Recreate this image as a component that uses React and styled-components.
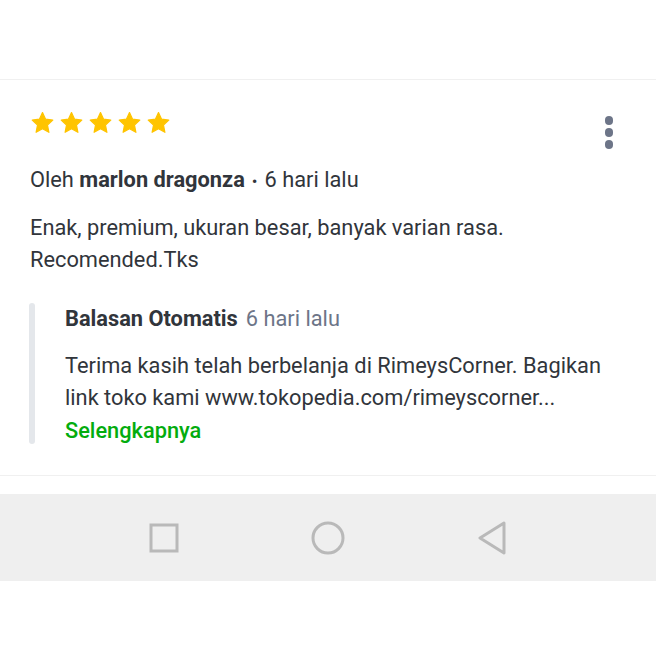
import React from 'react';
import styled, { createGlobalStyle } from 'styled-components';

const Global = createGlobalStyle`
  body {
    margin: 0;
    background: #fff;
    font-family: Roboto, "Noto Sans", Arial, sans-serif;
    color: #31353b;
  }
`

const Page = styled.div`
  width: 656px;
  height: 656px;
  display: flex;
  flex-direction: column;
`

const TopSpace = styled.div`
  height: 79px;
  border-bottom: 1px solid #f0f0f0;
`

const Review = styled.section`
  padding: 31px 30px 28px 30px;
  border-bottom: 1px solid #f0f0f0;
`

const Head = styled.div`
  display: flex;
  justify-content: space-between;
  align-items: flex-start;
  height: 24px;
`

const Stars = styled.div`
  display: flex;
  gap: 4px;
`

const Kebab = styled.div`
  display: flex;
  flex-direction: column;
  gap: 3.5px;
  margin-top: 5px;
  margin-right: 13px;
  span {
    width: 8.5px;
    height: 8.5px;
    border-radius: 50%;
    background: #6d7588;
  }
`

const Meta = styled.div`
  margin-top: 29px;
  font-size: 21.8px;
  line-height: 32px;
  color: #31353b;
  b { font-weight: 700; }
  .dot { margin: 0 7px; font-size: 17px; }
`

const Text = styled.p`
  margin: 15px 0 0;
  font-size: 21.8px;
  line-height: 32px;
  color: #31353b;
`

const Reply = styled.div`
  margin-top: 27px;
  display: flex;
  gap: 30px;
`

const Bar = styled.div`
  width: 6px;
  flex: none;
  border-radius: 3px;
  background: #e4e7eb;
  margin-left: -1px;
  margin-bottom: 3px;
`

const ReplyBody = styled.div`
  font-size: 21.8px;
  line-height: 32px;
`

const ReplyTitle = styled.div`
  b { font-weight: 700; color: #31353b; }
  span { color: #6d7588; margin-left: 8px; }
`

const ReplyText = styled.div`
  margin-top: 15px;
  color: #31353b;
`

const More = styled.div`
  color: #03ac0e;
  font-weight: 500;
  margin-top: 1px;
`

const Nav = styled.nav`
  margin-top: 18px;
  height: 87px;
  background: #efefef;
  display: flex;
  align-items: center;
  justify-content: center;
`

const NavItem = styled.div`
  width: 164px;
  display: flex;
  justify-content: center;
`

const Star = () => (
  <svg width="25" height="24" viewBox="0 0 24 24">
    <path
      d="M12 1.6l3.1 6.6 7.2.9-5.3 5 1.4 7.2L12 17.8l-6.4 3.5 1.4-7.2-5.3-5 7.2-.9z"
      fill="#ffc400"
      stroke="#ffc400"
      strokeWidth="1.2"
      strokeLinejoin="round"
    />
  </svg>
)

export default function App() {
  return (
    <Page>
      <Global />
      <TopSpace />
      <Review>
        <Head>
          <Stars>
            {[0, 1, 2, 3, 4].map(i => <Star key={i} />)}
          </Stars>
          <Kebab><span /><span /><span /></Kebab>
        </Head>
        <Meta>
          Oleh <b>marlon dragonza</b><span className="dot">•</span>6 hari lalu
        </Meta>
        <Text>
          Enak, premium, ukuran besar, banyak varian rasa.<br />Recomended.Tks
        </Text>
        <Reply>
          <Bar />
          <ReplyBody>
            <ReplyTitle><b>Balasan Otomatis</b><span>6 hari lalu</span></ReplyTitle>
            <ReplyText>
              Terima kasih telah berbelanja di RimeysCorner. Bagikan<br />
              link toko kami www.tokopedia.com/rimeyscorner...
            </ReplyText>
            <More>Selengkapnya</More>
          </ReplyBody>
        </Reply>
      </Review>
      <Nav>
        <NavItem>
          <svg width="30" height="30" viewBox="0 0 30 30">
            <rect x="2" y="2" width="26" height="26" fill="none" stroke="#b9b9b9" strokeWidth="3" />
          </svg>
        </NavItem>
        <NavItem>
          <svg width="34" height="34" viewBox="0 0 34 34">
            <circle cx="17" cy="17" r="15" fill="none" stroke="#b9b9b9" strokeWidth="3" />
          </svg>
        </NavItem>
        <NavItem>
          <svg width="30" height="34" viewBox="0 0 30 34">
            <path d="M27 2L3 17l24 15z" fill="none" stroke="#b9b9b9" strokeWidth="3" strokeLinejoin="round" />
          </svg>
        </NavItem>
      </Nav>
    </Page>
  );
}
